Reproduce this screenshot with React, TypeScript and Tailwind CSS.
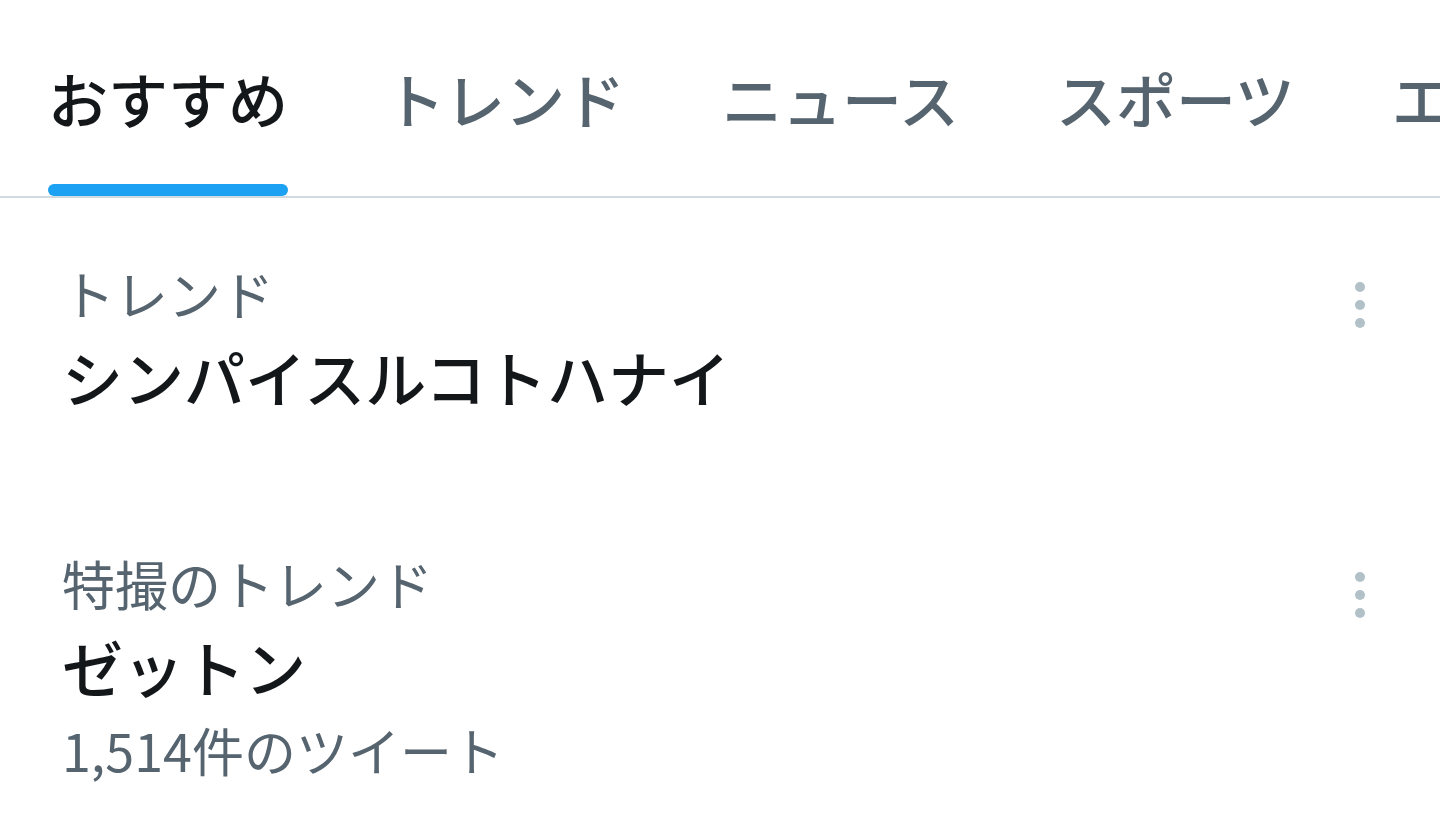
const tabs = ["おすすめ", "トレンド", "ニュース", "スポーツ", "エンタメ"];

function MoreDots() {
  return (
    <svg width="12" height="52" viewBox="0 0 12 52" className="shrink-0">
      <circle cx="6" cy="7" r="5" fill="#b2c1c8" />
      <circle cx="6" cy="25" r="5" fill="#b2c1c8" />
      <circle cx="6" cy="43" r="5" fill="#b2c1c8" />
    </svg>
  );
}

type Trend = { context: string; title: string; count?: string };

const trends: Trend[] = [
  { context: "トレンド", title: "シンパイスルコトハナイ" },
  { context: "特撮のトレンド", title: "ゼットン", count: "1,514件のツイート" },
];

export default function App() {
  return (
    <div
      className="w-[1440px] h-[838px] overflow-hidden bg-white"
      style={{ fontFamily: '"Noto Sans CJK JP", "Noto Sans", sans-serif' }}
    >
      {/* Tabs */}
      <nav className="flex gap-[97px] pl-[48px] border-b-2 border-[#cfdbe0] whitespace-nowrap">
        {tabs.map((t, i) => (
          <div key={t} className="flex flex-col shrink-0">
            <div
              className={
                "h-[184px] pt-[12px] flex items-center text-[60px] font-medium leading-none " +
                (i === 0 ? "text-[#14171a]" : "text-[#56646f]")
              }
            >
              {t}
            </div>
            <div className={"h-[12px] rounded-full " + (i === 0 ? "bg-[#1da1f2]" : "bg-transparent")} />
          </div>
        ))}
      </nav>

      {/* Trend list */}
      <div className="flex flex-col">
        {trends.map((tr) => (
          <div key={tr.title} className="flex justify-between pl-[62px] pr-[74px] pt-[54px] pb-[70px]">
            <div className="flex flex-col">
              <div className="h-[83px] flex items-center text-[53px] text-[#56646f] leading-none">{tr.context}</div>
              <div className="h-[83px] flex items-center text-[61px] font-medium text-[#14171a] leading-none">
                {tr.title}
              </div>
              {tr.count && (
                <div className="h-[83px] flex items-center text-[52px] text-[#56646f] leading-none">{tr.count}</div>
              )}
            </div>
            <div className="pt-[28px]">
              <MoreDots />
            </div>
          </div>
        ))}
      </div>
    </div>
  );
}
